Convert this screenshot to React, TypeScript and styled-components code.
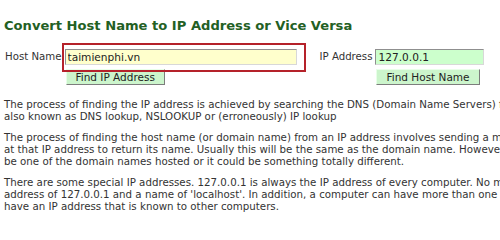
import styled, { createGlobalStyle } from "styled-components";

const GlobalStyle = createGlobalStyle`
     html, body {
          margin: 0;
          padding: 0;
          background: #ffffff;
          overflow: hidden;
     }
     body {
          font-family: "DejaVu Sans", Verdana, sans-serif;
          color: #333333;
     }
`;

const StyledPage = styled.div`
     width: 500px;
     height: 223px;
     overflow: hidden;
     padding: 19px 0 0 4px;
     box-sizing: border-box;
`;

const StyledTitle = styled.h1`
     margin: 0;
     font-size: 13.1px;
     font-weight: bold;
     color: #236024;
     white-space: nowrap;
     line-height: 14px;
`;

const StyledForm = styled.div`
     display: flex;
     align-items: flex-start;
     margin-top: 16px;
     font-size: 10.2px;
`;

const StyledLabel = styled.label`
     flex-shrink: 0;
     line-height: 16px;
     padding-left: 1px;
     margin-right: 3px;
     white-space: nowrap;
`;

const StyledField = styled.div<{ width: number }>`
     position: relative;
     flex-shrink: 0;
     display: flex;
     flex-direction: column;
     align-items: flex-start;
     width: ${(props) => props.width}px;
     margin-right: 22px;
`;

const StyledInput = styled.input<{ tint: string }>`
     width: 100%;
     height: 16px;
     box-sizing: border-box;
     margin: 0;
     padding: 0 2px;
     font: inherit;
     font-size: 10.6px;
     color: #222222;
     background: ${(props) => props.tint};
     border: 1px solid;
     border-color: #8f8f8f #d8d8d8 #d8d8d8 #8f8f8f;
     outline: none;
`;

const StyledButton = styled.button`
     margin: 4px 0 0 1px;
     height: 16px;
     padding: 0 9px;
     box-sizing: border-box;
     font: inherit;
     font-size: 10.5px;
     color: #222222;
     background: #ccf5cc;
     border: 1px solid;
     border-color: #e8ffe8 #7d7d7d #7d7d7d #e8ffe8;
     line-height: 13px;
     white-space: nowrap;
`;

// red annotation frame drawn over the host name field
const StyledHighlight = styled.span`
     position: absolute;
     left: -3px;
     top: -6px;
     width: 244px;
     height: 29px;
     border: 2px solid #b5222a;
     box-sizing: border-box;
     pointer-events: none;
`;

const StyledText = styled.div`
     margin-top: 13px;
     font-size: 10.25px;
     line-height: 12px;
     white-space: nowrap;
`;

const StyledParagraph = styled.p`
     margin: 0 0 9px 0;
`;

export default function App() {
     return (
          <>
               <GlobalStyle />
               <StyledPage>
                    <StyledTitle>Convert Host Name to IP Address or Vice Versa</StyledTitle>
                    <StyledForm>
                         <StyledLabel>Host Name</StyledLabel>
                         <StyledField width={232}>
                              <StyledInput tint="#ffffcc" defaultValue="taimienphi.vn" />
                              <StyledButton>Find IP Address</StyledButton>
                              <StyledHighlight />
                         </StyledField>
                         <StyledLabel>IP Address</StyledLabel>
                         <StyledField width={109}>
                              <StyledInput tint="#ccffcc" defaultValue="127.0.0.1" />
                              <StyledButton>Find Host Name</StyledButton>
                         </StyledField>
                    </StyledForm>
                    <StyledText>
                         <StyledParagraph>
                              The process of finding the IP address is achieved by searching the DNS (Domain Name Servers) for the host name. This is
                              <br />
                              also known as DNS lookup, NSLOOKUP or (erroneously) IP lookup
                         </StyledParagraph>
                         <StyledParagraph>
                              The process of finding the host name (or domain name) from an IP address involves sending a message to the computer
                              <br />
                              at that IP address to return its name. Usually this will be the same as the domain name. However, it could
                              <br />
                              be one of the domain names hosted or it could be something totally different.
                         </StyledParagraph>
                         <StyledParagraph>
                              There are some special IP addresses. 127.0.0.1 is always the IP address of every computer. No matter what computer
                              <br />
                              address of 127.0.0.1 and a name of 'localhost'. In addition, a computer can have more than one IP address
                              <br />
                              have an IP address that is known to other computers.
                         </StyledParagraph>
                    </StyledText>
               </StyledPage>
          </>
     );
}
